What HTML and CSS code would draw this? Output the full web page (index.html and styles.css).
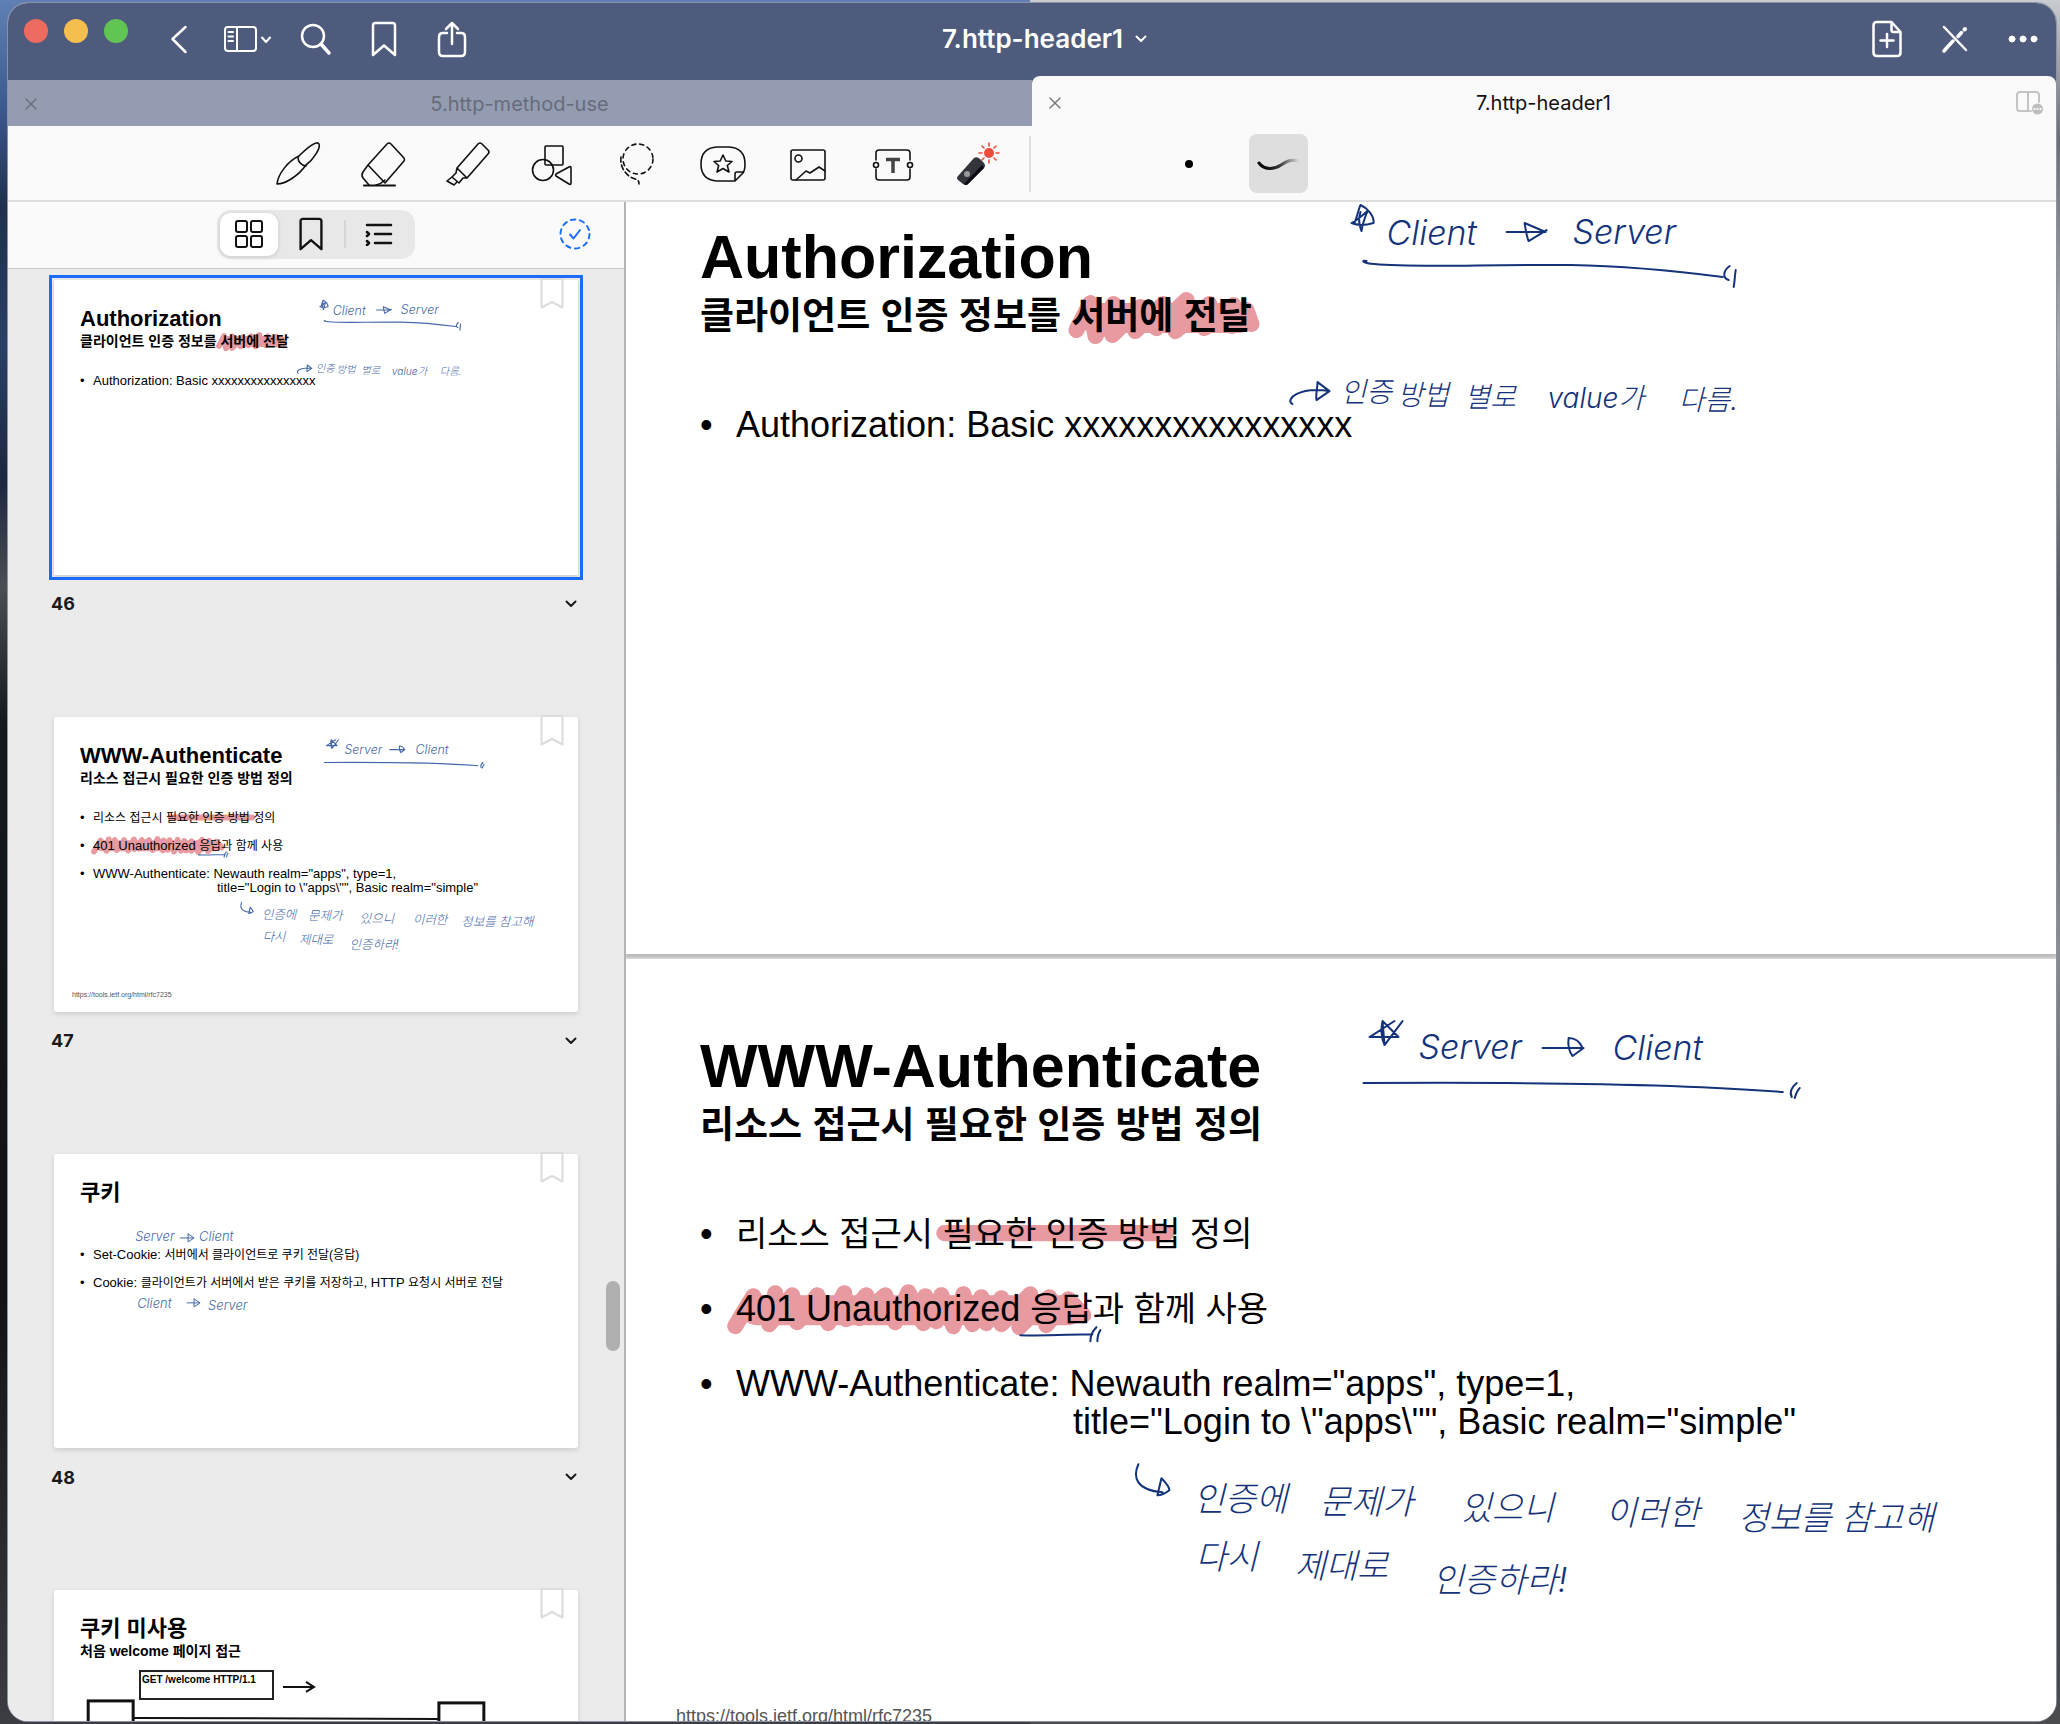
FILE: index.html
```html
<!DOCTYPE html>
<html lang="ko">
<head>
<meta charset="utf-8">
<title>7.http-header1</title>
<link rel="stylesheet" href="styles.css">
</head>
<body>
<svg class="defs" aria-hidden="true">
  <symbol id="mark-46" viewBox="0 0 1429 804">
    <path class="marker core" d="M468 168H612"/>
    <path class="marker" d="M450 180 464 153 469 186 487 154 486 185 514 157 509 181 537 154 530 178 560 150 549 181 583 154 578 178 607 155 606 176 620 160 625 174"/>
  </symbol>
  <symbol id="mark-47" viewBox="0 0 1429 804">
    <path class="marker" d="M318 274H540"/>
    <path class="marker core" d="M130 351H442"/>
    <path class="marker" d="M109 367 127 337 143 362 149 334 143 365 166 336 171 363 191 336 202 364 218 334 220 360 240 336 233 359 259 336 269 363 282 333 297 364 299 337 310 362 315 336 327 367 337 335 346 365 355 338 360 364 375 339 375 365 404 335 393 368 423 338 420 366 442 340 457 356"/>
  </symbol>
  <symbol id="flag" viewBox="0 0 24 32"><path d="M1.500 1V29.500L12 24L22.500 29.500V1Z"/></symbol>
  <symbol id="caret" viewBox="0 0 12 8"><path d="M1.500 1.500 6 6 10.500 1.500"/></symbol>
  <symbol id="bookmark" viewBox="0 0 28 38"><path d="M3 5.500Q3 3 5.500 3H22.500Q25 3 25 5.500V35L14 25.500 3 35Z"/></symbol>
  <symbol id="cross" viewBox="0 0 12 12"><path d="M1 1 11 11M11 1 1 11"/></symbol>
</svg>

<div class="window">
  <header class="titlebar">
    <div class="titlebar-left">
      <div class="lights">
        <button class="light red" aria-label="Close"></button>
        <button class="light yellow" aria-label="Minimize"></button>
        <button class="light green" aria-label="Zoom"></button>
      </div>
      <button class="bar-button back" aria-label="Back"><svg width="20" height="32" viewBox="0 0 20 32"><path d="M16.500 4 3.500 16 16.500 29"/></svg></button>
      <button class="bar-button panel" aria-label="Sidebar"><svg width="50" height="32" viewBox="0 0 50 32"><rect x="3" y="4" width="31" height="24" rx="3"/><path d="M15 4V28M6.500 9H11M6.500 13.500H11M6.500 18H11" /><path d="M40 14.500 44 19 48 14.500"/></svg></button>
      <button class="bar-button find" aria-label="Search"><svg width="32" height="34" viewBox="0 0 32 34"><circle cx="13" cy="14" r="11"/><path d="M21 22 29 31" stroke-width="3.500"/></svg></button>
      <button class="bar-button mark" aria-label="Bookmark"><svg width="28" height="38"><use href="#bookmark"/></svg></button>
      <button class="bar-button" aria-label="Share"><svg width="30" height="38" viewBox="0 0 30 38"><path d="M10 13H6Q2 13 2 17V32Q2 36 6 36H24Q28 36 28 32V17Q28 13 24 13H20M15 24V3M9 9 15 3 21 9"/></svg></button>
    </div>
    <h1 class="doc-title">7.http-header1<svg class="title-caret" width="12" height="8"><use href="#caret"/></svg></h1>
    <div class="titlebar-right">
      <button class="bar-button" aria-label="Add page"><svg width="30" height="38" viewBox="0 0 30 38"><path d="M19.500 2H5Q1.500 2 1.500 5.500V32.500Q1.500 36 5 36H25Q28.500 36 28.500 32.500V12ZM19.500 2V10Q19.500 12 21.500 12H28.500M15 14V27M8.500 20.500H21.500"/></svg></button>
      <button class="bar-button" aria-label="Read only"><svg width="26" height="28" viewBox="0 0 26 28"><path d="M2 2 24 25"/><path d="M22.500 4.500 23 4" stroke-width="4"/><path d="M16 11.500 19.500 7.500" stroke-width="3.500"/><path d="M11 16 5 22.500 2 26" stroke-width="3.500"/></svg></button>
      <button class="bar-button" aria-label="More"><svg class="dots" width="30" height="10" viewBox="0 0 30 10"><circle cx="4" cy="5" r="3"/><circle cx="15" cy="5" r="3"/><circle cx="26" cy="5" r="3"/></svg></button>
    </div>
  </header>

  <nav class="tabs">
    <div class="tab">
      <button class="tab-close" aria-label="Close tab"><svg width="12" height="12"><use href="#cross"/></svg></button>
      <a class="tab-name" href="#">5.http-method-use</a>
      <span class="tab-end"></span>
    </div>
    <div class="tab active">
      <button class="tab-close" aria-label="Close tab"><svg width="12" height="12"><use href="#cross"/></svg></button>
      <a class="tab-name" href="#">7.http-header1</a>
      <button class="tab-end" aria-label="Split view"><svg width="30" height="28" viewBox="0 0 30 28"><path d="M16 22H5Q2 22 2 19V6Q2 3 5 3H21Q24 3 24 6V13M13 3V22"/><circle cx="22.500" cy="20" r="5.500"/><path class="tiny" d="M19.500 20H19.600M22.500 20H22.600M25.400 20H25.500"/></svg></button>
    </div>
  </nav>

  <div class="toolbar">
    <div class="tools">
      <button aria-label="Pen"><svg viewBox="0 0 48 48"><path d="M3 44C4 34 14 21 25 16C34 7 43 0 45 4C47 8 39 20 32 25C25 35 12 44 3 44Z"/><path d="M24 17C24 22 27 25 32 26"/></svg></button>
      <button aria-label="Eraser"><svg viewBox="0 0 48 48"><path d="M28 4Q30 2 32 4L45 18Q46 20 45 21L26 43 9 25ZM9 25 4 32Q2 35 4 38L10 45M17 45Q22 44 26 40"/><path d="M5 45.500H36" stroke-width="2"/></svg></button>
      <button aria-label="Highlighter"><svg viewBox="0 0 48 48"><path d="M34 4Q36 2 38 4L44 10Q46 12 44 14L23 38 13 28ZM13 28 12 33 8 37 15 43 19 38 23 38M8 37 3 41 10 45 13 42"/></svg></button>
      <button aria-label="Shapes"><svg viewBox="0 0 48 48"><rect x="16" y="6" width="18" height="19" rx="1"/><circle cx="14" cy="30" r="10.500"/><path d="M27 34Q26 35 27 36L40 44Q42 45 42 43V28Q42 26 40 27Z"/></svg></button>
      <button aria-label="Lasso"><svg viewBox="0 0 48 48"><circle cx="24" cy="19" r="15" stroke-dasharray="4 4"/><path d="M7 17C6 26 10 32 15 36S25 38 25 44" stroke-dasharray="5 3"/></svg></button>
      <button aria-label="Stickers"><svg viewBox="0 0 48 48"><path d="M18 7H30Q46 8 46 24Q46 30 44 33L36 41H18Q2 40 2 24Q2 8 18 7ZM44 32H38Q36 32 36 34V41"/><path d="M24 15 26.800 21 33 21.500 28.300 25.500 30 32 24 28.500 18 32 19.700 25.500 15 21.500 21.200 21Z"/></svg></button>
      <button aria-label="Image"><svg viewBox="0 0 48 48"><rect x="7" y="10" width="34" height="30" rx="2"/><circle cx="14.500" cy="18.500" r="3.500"/><path d="M12 40 22 31 26 33 35 27 41 31"/></svg></button>
      <button aria-label="Text"><svg viewBox="0 0 48 48"><path d="M7 20V13Q7 10 10 10H38Q41 10 41 13V20M7 29V37Q7 40 10 40H38Q41 40 41 37V29"/><circle cx="7" cy="25" r="2.500"/><circle cx="41" cy="25" r="2.500"/><path d="M17 19.500H31M24 19V33" stroke-width="3.500" stroke="#444" stroke-linecap="butt"/></svg></button>
      <button aria-label="Laser pointer"><svg viewBox="0 0 48 48"><path d="M4 36 20 18Q23 16 26 19L30 23Q32 26 30 28L14 44Q12 46 9 44L4 40Q2 38 4 36Z" fill="#33353d" stroke="none"/><path d="M30 28 14 44Q12 46 10 44L28 25Z" fill="#0b0c10" stroke="none"/><circle cx="13" cy="34" r="3" fill="#999" stroke="none"/><g stroke="#ee4b3c"><circle cx="35" cy="13" r="5" fill="#ee4b3c" stroke="none"/><path d="M35 3V6M35 20V23M25 13H28M42 13H45M28 6 30 8M40 18 42 20M42 6 40 8M28 20 30 18"/></g></svg></button>
    </div>
    <div class="strokes">
      <button aria-label="Dot"><svg viewBox="0 0 48 48"><circle cx="24" cy="24" r="4" fill="#000" stroke="none"/></svg></button>
      <button class="picked" aria-label="Trail"><svg viewBox="0 0 48 48"><defs><linearGradient id="fade"><stop offset="0"/><stop offset=".5" stop-color="#333"/><stop offset="1" stop-color="#ddd"/></linearGradient></defs><path d="M4 23C10 31 20 29 26 25S36 19 44 21" stroke="url(#fade)" stroke-width="3"/></svg></button>
    </div>
  </div>

  <div class="workspace">
    <aside class="sidebar">
      <div class="sidebar-head">
        <div class="segments">
          <button class="segment chosen" aria-label="Thumbnails"><svg width="30" height="30" viewBox="0 0 30 30"><rect x="2" y="2" width="11" height="11" rx="2"/><rect x="17" y="2" width="11" height="11" rx="2"/><rect x="2" y="17" width="11" height="11" rx="2"/><rect x="17" y="17" width="11" height="11" rx="2"/></svg></button>
          <button class="segment" aria-label="Bookmarks"><svg width="28" height="36" viewBox="0 0 28 38"><use href="#bookmark"/></svg></button>
          <span class="segment-rule"></span>
          <button class="segment" aria-label="Outline"><svg width="28" height="24" viewBox="0 0 28 24"><path d="M2 3H26M10 12H26M10 21H26M2 10 4 12 2 14M2 19 4 21 2 23"/></svg></button>
        </div>
        <button class="select" aria-label="Select pages"><svg width="34" height="34" viewBox="0 0 34 34"><circle cx="17" cy="17" r="14.500" stroke-dasharray="4.500 4.610"/><path d="M12 17.500 15.500 21.500 22 13"/></svg></button>
      </div>
      <div class="thumbs">
        <figure class="thumb">
          <div class="slide small selected">
            <svg class="layer"><use href="#mark-46"/></svg>
            <h2>Authorization</h2>
            <h3>클라이언트 인증 정보를 서버에 전달</h3>
            <ul><li><span>Authorization: Basic xxxxxxxxxxxxxxxx</span></li></ul>
            <svg class="layer ink" viewBox="0 0 1429 804">
              <path class="pen" d="M728 73C731 66 732 59 734 55C741 58 748 66 747 73C740 75 732 76 725 73C731 70 737 64 741 61M741 61C738 68 736 74 735 81C732 74 732 68 734 62"/>
              <text class="hand" x="760" y="95">Client</text>
              <path class="pen" d="M880 82H919L898 73C899 79 900 86 902 91L920 80"/>
              <text class="hand" x="946" y="94">Server</text>
              <path class="pen" d="M740 111C734 110 736 113 748 114C790 118 860 114 944 115C1000 116 1050 121 1096 127"/>
              <path class="pen" d="M1103 116C1096 121 1096 128 1102 130M1109 120C1108 126 1108 132 1107 137"/>
              <path class="pen" d="M666 254C658 250 672 236 703 241L691 232C691 238 689 245 690 250L703 241"/>
              <text class="hand hand-small" x="714" y="252">인증</text>
              <text class="hand hand-small" x="771" y="255">방법</text>
              <text class="hand hand-small" x="838" y="257">별로</text>
              <text class="hand hand-small" x="921" y="258">value가</text>
              <text class="hand hand-small" x="1052" y="260">다름.</text>
            </svg>
            <svg class="flag"><use href="#flag"/></svg>
          </div>
          <figcaption>46<button aria-label="Page 46 menu"><svg width="12" height="8"><use href="#caret"/></svg></button></figcaption>
        </figure>
        <figure class="thumb">
          <div class="slide small">
            <svg class="layer"><use href="#mark-47"/></svg>
            <h2>WWW-Authenticate</h2>
            <h3>리소스 접근시 필요한 인증 방법 정의</h3>
            <ul>
              <li><span class="ko">리소스 접근시 필요한 인증 방법 정의</span></li>
              <li><span>401 Unauthorized <span class="ko">응답과 함께 사용</span></span></li>
              <li><span>WWW-Authenticate: Newauth realm="apps", type=1,<span class="turn">title="Login to \"apps\"", Basic realm="simple"</span></span></li>
            </ul>
            <a class="source" href="https://tools.ietf.org/html/rfc7235">https://tools.ietf.org/html/rfc7235</a>
            <svg class="layer ink" viewBox="0 0 1429 804">
              <path class="pen" d="M756 62 758 86 776 62M756 62 772 78H743L768 62M756 62C754 70 755 80 758 86"/>
              <text class="hand" x="792" y="100">Server</text>
              <path class="pen" d="M916 89H956C953 82 948 79 942 79C941 86 943 93 946 97L957 89"/>
              <text class="hand" x="986" y="101">Client</text>
              <path class="pen" d="M737 124C900 123 1060 125 1156 133"/>
              <path class="pen" d="M1170 124C1164 129 1163 134 1165 138M1173 129C1170 132 1169 136 1168 139"/>
              <path class="pen" d="M394 376C420 377 445 375 466 375M470 368C466 372 464 378 464 382M474 371C472 374 471 378 471 382"/>
              <path class="pen" d="M512 505C506 518 510 531 536 533M535 519C540 524 543 528 543 531C539 534 535 536 531 536L535 519"/>
              <text class="hand" x="567" y="552">인증에</text>
              <text class="hand" x="693" y="555">문제가</text>
              <text class="hand" x="834" y="561">있으니</text>
              <text class="hand" x="979" y="566">이러한</text>
              <text class="hand" x="1111" y="571">정보를</text>
              <text class="hand" x="1214" y="571">참고해</text>
              <text class="hand" x="569" y="610">다시</text>
              <text class="hand" x="668" y="619">제대로</text>
              <text class="hand" x="806" y="633">인증하라!</text>
            </svg>
            <svg class="flag"><use href="#flag"/></svg>
          </div>
          <figcaption>47<button aria-label="Page 47 menu"><svg width="12" height="8"><use href="#caret"/></svg></button></figcaption>
        </figure>
        <figure class="thumb">
          <div class="slide small untitled">
            <h2>쿠키</h2>
            <ul>
              <li><span>Set-Cookie: <span class="ko">서버에서 클라이언트로 쿠키 전달(응답)</span></span></li>
              <li><span>Cookie: <span class="ko">클라이언트가 서버에서 받은 쿠키를 저장하고,</span> HTTP <span class="ko">요청시 서버로 전달</span></span></li>
            </ul>
            <svg class="layer ink fine" viewBox="0 0 524 295">
              <text class="hand" x="81" y="87">Server</text>
              <path class="pen" d="M126 84H139M134 80V88L140 84 134 80"/>
              <text class="hand" x="145" y="87">Client</text>
              <text class="hand" x="83" y="154">Client</text>
              <path class="pen" d="M133 149H145M140 145V153L146 149 140 145"/>
              <text class="hand" x="154" y="156">Server</text>
            </svg>
            <svg class="flag"><use href="#flag"/></svg>
          </div>
          <figcaption>48<button aria-label="Page 48 menu"><svg width="12" height="8"><use href="#caret"/></svg></button></figcaption>
        </figure>
        <figure class="thumb">
          <div class="slide small">
            <h2>쿠키 미사용</h2>
            <h3>처음 welcome 페이지 접근</h3>
            <div class="request">GET /welcome HTTP/1.1</div>
            <svg class="layer" viewBox="0 0 524 295">
              <g class="diagram"><path d="M229 97H258M252 92 260 97 252 102" stroke-width="2"/><rect x="34" y="111" width="45" height="60" stroke-width="3"/><rect x="385" y="113" width="45" height="60" stroke-width="3"/><path d="M80 128 384 129" stroke-width="2"/></g>
            </svg>
            <svg class="flag"><use href="#flag"/></svg>
          </div>
        </figure>
      </div>
      <div class="scroll-thumb"></div>
    </aside>

    <main class="pages">
      <section class="slide first">
        <svg class="layer"><use href="#mark-46"/></svg>
        <h2>Authorization</h2>
        <h3>클라이언트 인증 정보를 서버에 전달</h3>
        <ul><li><span>Authorization: Basic xxxxxxxxxxxxxxxx</span></li></ul>
        <svg class="layer ink" viewBox="0 0 1429 804">
          <path class="pen" d="M728 73C731 66 732 59 734 55C741 58 748 66 747 73C740 75 732 76 725 73C731 70 737 64 741 61M741 61C738 68 736 74 735 81C732 74 732 68 734 62"/>
          <text class="hand" x="760" y="95">Client</text>
          <path class="pen" d="M880 82H919L898 73C899 79 900 86 902 91L920 80"/>
          <text class="hand" x="946" y="94">Server</text>
          <path class="pen" d="M740 111C734 110 736 113 748 114C790 118 860 114 944 115C1000 116 1050 121 1096 127"/>
          <path class="pen" d="M1103 116C1096 121 1096 128 1102 130M1109 120C1108 126 1108 132 1107 137"/>
          <path class="pen" d="M666 254C658 250 672 236 703 241L691 232C691 238 689 245 690 250L703 241"/>
          <text class="hand hand-small" x="714" y="252">인증</text>
          <text class="hand hand-small" x="771" y="255">방법</text>
          <text class="hand hand-small" x="838" y="257">별로</text>
          <text class="hand hand-small" x="921" y="258">value가</text>
          <text class="hand hand-small" x="1052" y="260">다름.</text>
        </svg>
      </section>
      <section class="slide">
        <svg class="layer"><use href="#mark-47"/></svg>
        <h2>WWW-Authenticate</h2>
        <h3>리소스 접근시 필요한 인증 방법 정의</h3>
        <ul>
          <li><span class="ko">리소스 접근시 필요한 인증 방법 정의</span></li>
          <li><span>401 Unauthorized <span class="ko">응답과 함께 사용</span></span></li>
          <li><span>WWW-Authenticate: Newauth realm="apps", type=1,<span class="turn">title="Login to \"apps\"", Basic realm="simple"</span></span></li>
        </ul>
        <a class="source" href="https://tools.ietf.org/html/rfc7235">https://tools.ietf.org/html/rfc7235</a>
        <svg class="layer ink" viewBox="0 0 1429 804">
          <path class="pen" d="M756 62 758 86 776 62M756 62 772 78H743L768 62M756 62C754 70 755 80 758 86"/>
          <text class="hand" x="792" y="100">Server</text>
          <path class="pen" d="M916 89H956C953 82 948 79 942 79C941 86 943 93 946 97L957 89"/>
          <text class="hand" x="986" y="101">Client</text>
          <path class="pen" d="M737 124C900 123 1060 125 1156 133"/>
          <path class="pen" d="M1170 124C1164 129 1163 134 1165 138M1173 129C1170 132 1169 136 1168 139"/>
          <path class="pen" d="M394 376C420 377 445 375 466 375M470 368C466 372 464 378 464 382M474 371C472 374 471 378 471 382"/>
          <path class="pen" d="M512 505C506 518 510 531 536 533M535 519C540 524 543 528 543 531C539 534 535 536 531 536L535 519"/>
          <text class="hand" x="567" y="552">인증에</text>
          <text class="hand" x="693" y="555">문제가</text>
          <text class="hand" x="834" y="561">있으니</text>
          <text class="hand" x="979" y="566">이러한</text>
          <text class="hand" x="1111" y="571">정보를</text>
          <text class="hand" x="1214" y="571">참고해</text>
          <text class="hand" x="569" y="610">다시</text>
          <text class="hand" x="668" y="619">제대로</text>
          <text class="hand" x="806" y="633">인증하라!</text>
        </svg>
      </section>
    </main>
  </div>
</div>
</body>
</html>
```

FILE: styles.css
```css
* { box-sizing: border-box; }

body {
  margin: 0;
  height: 100vh;
  padding: 3px 4px 3px 8px;
  overflow: hidden;
  font-family: Inter, "Noto Sans CJK KR", sans-serif;
  background:
    linear-gradient(#c9cdd2, #6b6f74 8%, #a9abad 20%, #55585c 35%, #8b8d8e 55%, #3a3c3f 80%, #4a4c4e) right / 50% 100% no-repeat,
    linear-gradient(#5f7fb5, #3d5b91 6%, #20304d 12%, #2b3f66 20%, #1c2740 28%, #4a4d52 34%, #15181c 42%, #101214 75%, #3b3d42);
}

h1, h2, h3, ul, figure { margin: 0; padding: 0; }
ul { list-style: none; }
button { border: 0; padding: 0; background: none; color: inherit; font: inherit; display: flex; align-items: center; justify-content: center; }
a { color: inherit; text-decoration: none; }
svg { display: block; fill: none; stroke: currentColor; stroke-width: 2; stroke-linecap: round; stroke-linejoin: round; }
.defs { position: absolute; width: 0; height: 0; }

.window {
  height: 100%;
  display: flex;
  flex-direction: column;
  overflow: hidden;
  border-radius: 20px;
  background: #fafafa;
  box-shadow: 0 0 0 1px #8a92a8;
}

/* Title bar */
.titlebar {
  height: 73px;
  flex: none;
  display: grid;
  grid-template-columns: 1fr auto 1fr;
  align-items: center;
  padding: 0 18px 2px 16px;
  background: #4f5b7d;
  color: #fff;
}
.titlebar-left { display: flex; align-items: center; }
.titlebar-right { display: flex; align-items: center; justify-content: flex-end; gap: 40px; }
.lights { display: flex; gap: 16px; margin: 0 41px 16px 0; }
.light { width: 24px; height: 24px; border-radius: 50%; }
.red { background: #ed6a5e; }
.yellow { background: #f5bf4f; }
.green { background: #61c554; }
.bar-button svg { stroke-width: 2.5; }
.back { margin-right: 33px; }
.bar-button.panel svg { stroke-width: 2; }
.panel { margin-right: 28px; }
.find { margin-right: 38px; }
.mark { margin-right: 39px; }
.bar-button .dots { fill: #fff; stroke-width: 1; }
.doc-title { display: flex; align-items: center; padding-left: 27px; font-size: 26px; font-weight: 600; }
.title-caret { margin-left: 12px; }

/* Document tabs */
.tabs { height: 50px; flex: none; display: grid; grid-template-columns: 1fr 1fr; align-items: end; background: #4f5b7d; }
.tab {
  height: 46px;
  display: grid;
  grid-template-columns: 24px 1fr 32px;
  align-items: center;
  padding: 2px 10px 0 17px;
  background: #949cb2;
  color: #676c7b;
  font-size: 20px;
}
.tab.active { height: 50px; padding-top: 4px; border-radius: 8px 8px 0 0; background: #fafafa; color: #111; }
.tab-name { text-align: center; }
.tab-close { justify-content: flex-start; color: #6c7180; }
.tab-close svg { stroke-width: 1.5; }
.active .tab-close { color: #7c7c7c; }
.tab-end { color: #c4c4c4; }
.tab-end circle { fill: #bdbdbd; stroke: none; }
.tab-end .tiny { stroke: #fff; }

/* Drawing tools */
.toolbar { height: 76px; flex: none; display: flex; align-items: center; padding-top: 1px; border-bottom: 2px solid #dedede; color: #111; }
.toolbar svg { width: 48px; height: 48px; }
.tools { height: 56px; display: flex; gap: 37px; padding: 0 27px 0 266px; border-right: 2px solid #dedede; }
.tools svg { stroke-width: 1.6; }
.strokes { display: flex; gap: 31px; padding-left: 128px; }
.strokes button { width: 59px; height: 59px; border-radius: 8px; }
.picked { background: #dedede; }

/* Page sidebar */
.workspace { flex: 1; min-height: 0; display: flex; }
.sidebar { position: relative; width: 618px; flex: none; display: flex; flex-direction: column; border-right: 2px solid #b4b4b4; background: #ebebeb; }
.sidebar-head {
  height: 67px;
  flex: none;
  display: grid;
  grid-template-columns: 1fr auto 1fr;
  align-items: center;
  padding: 0 32px 2px;
  border-bottom: 1px solid #c8c8c8;
  background: #fafafa;
  color: #111;
}
.segments { grid-column: 2; display: flex; align-items: center; height: 49px; padding: 3px; border-radius: 14px; background: #e8e8e8; }
.segment { width: 66px; height: 43px; border-radius: 11px; }
.segment.chosen { width: 58px; background: #fff; box-shadow: 0 1px 5px #0002; }
.segment-rule { width: 2px; height: 28px; background: #d6d6d6; }
.segment svg { stroke-width: 2.5; }
.segment.chosen svg { stroke-width: 2; }
.select { justify-self: end; color: #1f6fff; }
.thumbs { flex: 1; min-height: 0; overflow: hidden; padding: 11px 46px 0; }
.thumb { margin-bottom: 101px; }
.thumb figcaption { display: flex; align-items: center; justify-content: space-between; height: 24px; margin: 17px 1px 0 -3px; font-size: 18px; font-weight: 700; color: #1a1a1a; }
.scroll-thumb { position: absolute; right: 4px; top: 1079px; width: 14px; height: 70px; border-radius: 7px; background: #b0b0b0; }

/* Slides */
.slide {
  position: relative;
  aspect-ratio: 16 / 9;
  padding: 76px 0 0 74px;
  background: #fff;
  color: #000;
  font-family: "Liberation Sans", "Noto Sans CJK KR", sans-serif;
  white-space: nowrap;
}
.slide > * { position: relative; }
.slide h2 { font-size: 61px; line-height: 62px; }
.slide h3 { margin-top: 7px; font-size: 37px; line-height: 44px; }
.slide ul { display: grid; gap: 37px; margin-top: 67px; font-size: 36px; line-height: 38px; }
.slide li { display: flex; }
.slide li::before { content: "•"; width: 36px; flex: none; }
.slide .ko { font-size: 34px; }
.turn { display: block; padding-left: 337px; }
.slide .layer { position: absolute; inset: 0; width: 100%; height: 100%; }
.slide .source { position: absolute; left: 50px; bottom: 36px; font-size: 18px; line-height: 24px; color: #555; }
.marker { stroke: #e79aa0; stroke-width: 16; }
.core { stroke-width: 30; }
.ink { color: #14337a; pointer-events: none; }
.pen { stroke-width: 2; }
.hand { fill: currentColor; stroke: none; font-family: Inter, "Noto Sans CJK KR", sans-serif; font-style: italic; font-weight: 300; font-size: 34px; }
.hand-small { font-size: 28px; }

.small { padding: 28px 0 0 26px; border-radius: 3px; box-shadow: 0 2px 5px #0002; }
.small h2 { font-size: 22px; line-height: 22px; }
.small h3 { margin-top: 3px; font-size: 14px; line-height: 16px; }
.small ul { gap: 14px; margin-top: 25px; font-size: 13px; line-height: 14px; }
.small.untitled ul { margin-top: 44px; }
.small li::before { width: 13px; }
.small .ko { font-size: 12px; }
.small .turn { padding-left: 124px; }
.small .source { left: 18px; bottom: 12px; font-size: 7px; line-height: 10px; }
.small .ink { color: #4468a8; }
.small .pen { stroke-width: 3; }
.small .fine .pen { stroke-width: 1; }
.fine .hand { font-size: 13px; }
.selected { border-radius: 0; outline: 3px solid #1a6dfb; outline-offset: 2px; }
.slide .flag { position: absolute; top: -2px; right: 14px; width: 24px; height: 32px; color: #dcdcdc; }
.request { width: 135px; height: 30px; margin: 11px 0 0 59px; padding: 1px; border: 2px solid #222; font-size: 10px; line-height: 14px; font-weight: 700; }
.diagram { stroke: #111; stroke-linecap: butt; stroke-linejoin: miter; }

.pages { flex: 1; min-width: 0; overflow: hidden; background: #fff; }
.first { margin: -52px 0 5px; box-shadow: 0 3px 4px 2px #0004; }
```
